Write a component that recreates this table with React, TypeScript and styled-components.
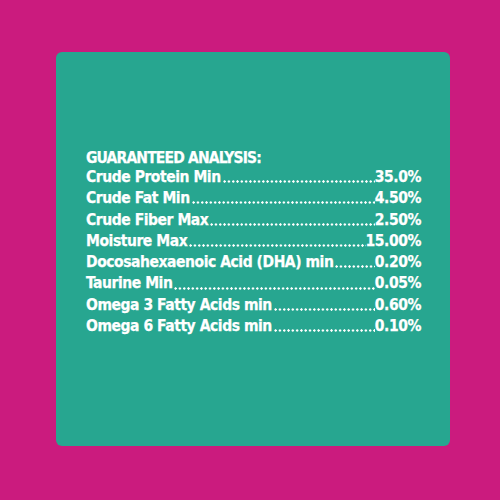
import styled, { createGlobalStyle } from 'styled-components';

const GlobalStyle = createGlobalStyle`
  html, body {
    margin: 0;
    padding: 0;
    background: #cb1b7e;
  }
`;

const Page = styled.div`
  width: 500px;
  height: 500px;
  background: #cb1b7e;
  display: flex;
  align-items: flex-start;
  padding: 52px 0 0 56px;
  box-sizing: border-box;
`;

const Card = styled.div`
  width: 394px;
  height: 394px;
  background: #27a690;
  border-radius: 6px;
  box-sizing: border-box;
  padding: 97px 29px 0 30px;
  display: flex;
  flex-direction: column;
  font-family: 'DejaVu Sans Condensed', 'Liberation Sans', sans-serif;
  font-weight: 700;
  color: #fff;
  -webkit-text-stroke: 0.25px #fff;
`;

const Heading = styled.div`
  font-size: 15.5px;
  line-height: 18px;
  letter-spacing: -0.85px;
`;

const Row = styled.div`
  display: flex;
  align-items: baseline;
  font-size: 15.5px;
  line-height: 21.3px;
  letter-spacing: -0.45px;
  white-space: nowrap;
`;

const Label = styled.span`
  flex: none;
`;

const Leader = styled.span`
  flex: 1;
  min-width: 0;
  align-self: stretch;
  margin: 0 0 0 1px;
  background-image: radial-gradient(circle, #fff 1.1px, transparent 1.5px);
  background-size: 4.3px 3.4px;
  background-repeat: repeat-x;
  background-position: 0.5px 13.2px;
`;

const Value = styled.span`
  flex: none;
`;

const rows: [string, string][] = [
  ['Crude Protein Min', '35.0%'],
  ['Crude Fat Min', '4.50%'],
  ['Crude Fiber Max', '2.50%'],
  ['Moisture Max', '15.00%'],
  ['Docosahexaenoic Acid (DHA) min', '0.20%'],
  ['Taurine Min', '0.05%'],
  ['Omega 3 Fatty Acids min', '0.60%'],
  ['Omega 6 Fatty Acids min', '0.10%'],
];

export default function App(): JSX.Element {
  return (
    <>
      <GlobalStyle />
      <Page>
        <Card>
          <Heading>GUARANTEED ANALYSIS:</Heading>
          {rows.map(([label, value]) => (
            <Row key={label}>
              <Label>{label}</Label>
              <Leader />
              <Value>{value}</Value>
            </Row>
          ))}
        </Card>
      </Page>
    </>
  );
}
